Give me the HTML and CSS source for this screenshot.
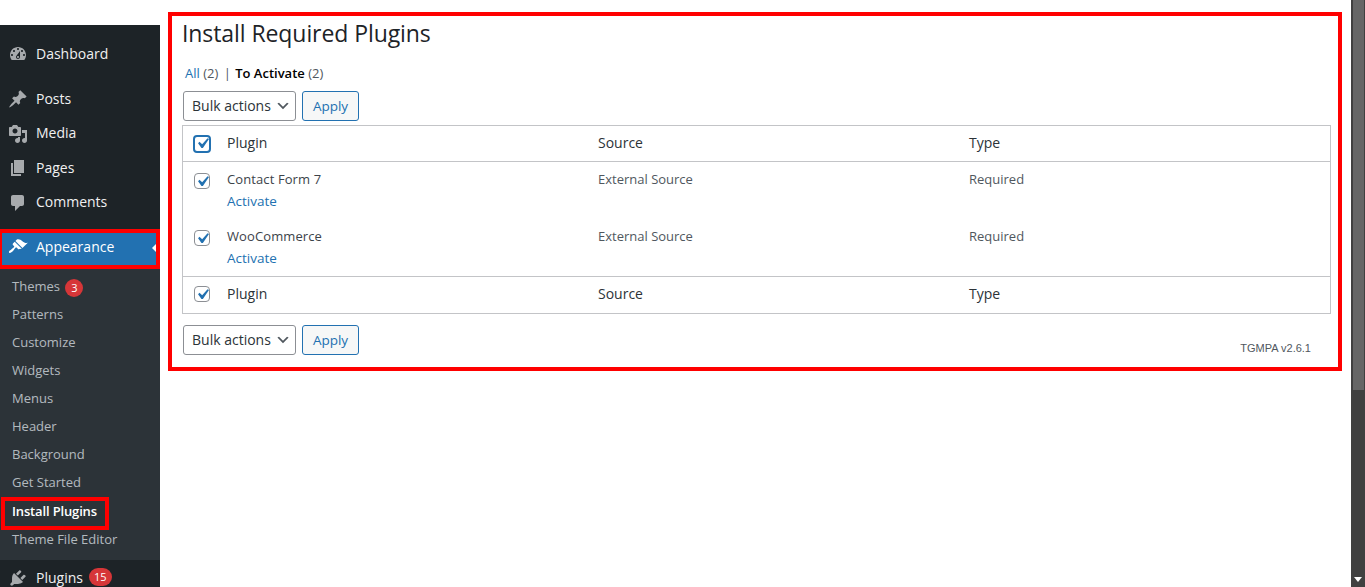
FILE: index.html
```html
<!DOCTYPE html>
<html lang="en">
<head>
<meta charset="utf-8">
<title>Install Required Plugins</title>
<link rel="stylesheet" href="styles.css">
</head>
<body>
<div class="page">
  <aside class="side">
    <div class="side-top"></div>
    <nav class="menu">
      <a class="item item-dash"><svg class="ico" viewBox="0 0 20 20"><path d="M3.76 16h12.48c1.1-1.37 1.76-3.11 1.76-5 0-4.42-3.58-8-8-8s-8 3.58-8 8c0 1.89.66 3.63 1.76 5zM10 4c.55 0 1 .45 1 1s-.45 1-1 1-1-.45-1-1 .45-1 1-1zM6 6c.55 0 1 .45 1 1s-.45 1-1 1-1-.45-1-1 .45-1 1-1zm8 0c.55 0 1 .45 1 1s-.45 1-1 1-1-.45-1-1 .45-1 1-1zm-5.37 5.55L12 7v6c0 1.1-.9 2-2 2s-2-.9-2-2c0-.57.24-1.08.63-1.45zM4 10c.55 0 1 .45 1 1s-.45 1-1 1-1-.45-1-1 .45-1 1-1zm12 0c.55 0 1 .45 1 1s-.45 1-1 1-1-.45-1-1 .45-1 1-1zm-5 3c0-.55-.45-1-1-1s-1 .45-1 1 .45 1 1 1 1-.45 1-1z"/></svg>Dashboard</a>
      <div class="sep"></div>
      <a class="item"><svg class="ico" viewBox="0 0 20 20"><path d="M10.44 3.02l1.82-1.82 6.36 6.35-1.83 1.82c-1.05-.68-2.48-.57-3.41.36l-.75.75c-.92.93-1.04 2.35-.35 3.41l-1.83 1.82-2.41-2.41-2.8 2.79c-.42.42-3.38 2.71-3.8 2.29s1.86-3.39 2.28-3.81l2.79-2.79L4.1 9.36l1.83-1.82c1.05.69 2.48.57 3.4-.36l.75-.75c.93-.92 1.05-2.35.36-3.41z"/></svg>Posts</a>
      <a class="item"><svg class="ico" viewBox="0 0 20 20"><path d="M13 11V4c0-.55-.45-1-1-1h-1.67L9 1H5L3.67 3H2c-.55 0-1 .45-1 1v7c0 .55.45 1 1 1h10c.55 0 1-.45 1-1zM7 4.5c1.38 0 2.5 1.12 2.5 2.5S8.38 9.5 7 9.5 4.5 8.38 4.5 7 5.62 4.5 7 4.5zM14 6h5v10.5c0 1.38-1.12 2.5-2.5 2.5S14 17.88 14 16.5s1.12-2.5 2.5-2.5c.17 0 .34.02.5.05V9h-3V6zm-4 8.05V13h2v3.5c0 1.38-1.12 2.5-2.5 2.5S7 17.88 7 16.5 8.12 14 9.5 14c.17 0 .34.02.5.05z"/></svg>Media</a>
      <a class="item"><svg class="ico" viewBox="0 0 20 20"><path d="M6 15V2h10v13H6zm-1 1h8v2H3V5h2v11z"/></svg>Pages</a>
      <a class="item"><svg class="ico" viewBox="0 0 20 20"><path d="M5 2h9c1.1 0 2 .9 2 2v7c0 1.1-.9 2-2 2h-2l-5 5v-5H5c-1.1 0-2-.9-2-2V4c0-1.1.9-2 2-2z"/></svg>Comments</a>
      <div class="sep"></div>
      <a class="item item-cur"><svg class="ico" viewBox="0 0 20 20"><path d="M14.48 11.06L7.41 3.99l1.5-1.5c.5-.56 2.3-.47 3.51.32 1.21.8 1.43 1.28 2.91 2.1 1.18.64 2.45 1.26 4.45.85zm-.71.71L6.7 4.7 4.93 6.47c-.39.39-.39 1.02 0 1.41l1.06 1.06c.39.39.39 1.03 0 1.42-.6.6-1.43 1.11-2.21 1.69-.35.26-.7.53-1.01.84C1.43 13.23.4 14.85 1.2 15.66c.8.8 2.43-.23 3.77-1.57.31-.31.58-.66.84-1.01.58-.78 1.09-1.61 1.69-2.21.39-.39 1.03-.39 1.42 0l1.06 1.06c.39.39 1.02.39 1.41 0z"/></svg>Appearance<span class="notch"></span><span class="mark mark-app"></span></a>
      <ul class="sub">
        <li>Themes <span class="badge badge-inline">3</span></li>
        <li>Patterns</li>
        <li>Customize</li>
        <li>Widgets</li>
        <li>Menus</li>
        <li>Header</li>
        <li>Background</li>
        <li>Get Started</li>
        <li class="sub-cur">Install Plugins<span class="mark mark-inst"></span></li>
        <li>Theme File Editor</li>
      </ul>
      <a class="item item-last"><svg class="ico" viewBox="0 0 20 20"><path d="M13.11 4.36L9.87 7.6 8 5.73l3.24-3.24c.35-.34 1.05-.2 1.56.32.52.51.66 1.21.31 1.55zm-8 1.77l.91-1.12 9.01 9.01-1.19.84c-.71.71-2.63 1.16-3.82 1.16H6.14L4.9 17.26c-.59.59-1.54.59-2.12 0-.59-.58-.59-1.53 0-2.12l1.24-1.24v-3.88c0-1.13.4-3.19 1.09-3.89zm7.26 3.97l3.24-3.24c.34-.35 1.04-.21 1.55.31.52.51.66 1.21.31 1.55l-3.24 3.25z"/></svg>Plugins <span class="badge badge-wide">15</span></a>
    </nav>
  </aside>
  <main class="main">
    <section class="wrap">
      <h1 class="title">Install Required Plugins</h1>
      <p class="views"><a class="link">All</a> (2) <span class="pipe">|</span> <b>To Activate</b> (2)</p>
      <div class="bulk">
        <div class="select">Bulk actions<svg class="chev" viewBox="0 0 20 20"><path d="M5 6l5 5 5-5 2 1-7 7-7-7z"/></svg></div>
        <div class="apply">Apply</div>
      </div>
      <div class="table">
        <div class="row head">
          <span class="check check-focus"><svg viewBox="0 0 20 20"><path d="M14.83 4.89l1.34.94-5.81 8.38H9.02L5.78 9.67l1.34-1.25 2.57 2.4z"/></svg></span>
          <span class="col col-a">Plugin</span><span class="col col-b">Source</span><span class="col">Type</span>
        </div>
        <div class="row body">
          <span class="check"><svg viewBox="0 0 20 20"><path d="M14.83 4.89l1.34.94-5.81 8.38H9.02L5.78 9.67l1.34-1.25 2.57 2.4z"/></svg></span>
          <div class="col col-a"><strong class="name">Contact Form 7</strong><a class="link act">Activate</a></div>
          <span class="col col-b">External Source</span><span class="col">Required</span>
        </div>
        <div class="row body">
          <span class="check"><svg viewBox="0 0 20 20"><path d="M14.83 4.89l1.34.94-5.81 8.38H9.02L5.78 9.67l1.34-1.25 2.57 2.4z"/></svg></span>
          <div class="col col-a"><strong class="name">WooCommerce</strong><a class="link act">Activate</a></div>
          <span class="col col-b">External Source</span><span class="col">Required</span>
        </div>
        <div class="row foot">
          <span class="check"><svg viewBox="0 0 20 20"><path d="M14.83 4.89l1.34.94-5.81 8.38H9.02L5.78 9.67l1.34-1.25 2.57 2.4z"/></svg></span>
          <span class="col col-a">Plugin</span><span class="col col-b">Source</span><span class="col">Type</span>
        </div>
      </div>
      <div class="bulk bulk-bottom">
        <div class="select">Bulk actions<svg class="chev" viewBox="0 0 20 20"><path d="M5 6l5 5 5-5 2 1-7 7-7-7z"/></svg></div>
        <div class="apply">Apply</div>
        <span class="ver">TGMPA v2.6.1</span>
      </div>
    </section>
  </main>
  <div class="scroll"><div class="thumb"></div><span class="arrow"></span></div>
</div>
</body>
</html>
```
FILE: styles.css
```css
* { box-sizing: border-box; }
html, body { margin: 0; height: 100%; overflow: hidden; background: #fff; }
body { font-family: "Open Sans", "Noto Sans", sans-serif; font-size: 13px; color: #50575e; }
.page { display: flex; width: 1365px; height: 587px; overflow: hidden; }

.side { width: 160px; flex: none; display: flex; flex-direction: column; }
.side-top { height: 25px; flex: none; }
.menu { flex: 1; background: #1d2327; padding-top: 12px; }
.item { position: relative; display: flex; align-items: center; height: 34.4px; padding: 0 0 2px 36px; color: #f0f0f1; font-size: 14px; }
.sep { height: 11px; }
.ico { position: absolute; left: 8px; top: 7px; width: 20px; height: 20px; fill: #a7aaad; }
.item-cur { background: #2271b1; color: #fff; height: 32px; margin-top: 2px; padding-bottom: 5px; }
.item-cur .ico { fill: #fff; top: 4px; }
.item-last { padding-bottom: 0; }
.item-last .ico { top: 8px; }
.notch { position: absolute; right: 4px; top: 11px; border: 4px solid transparent; border-right-color: #fff; border-left-width: 0; }
.mark { position: absolute; border: 4px solid #f00; pointer-events: none; }
.mark-app { left: 0; right: 0; top: -4px; bottom: -4px; border-left-width: 2px; }
.mark-inst { left: 1px; top: 0; width: 108px; height: 33px; }
.sub { list-style: none; margin: 4px 0 0; padding: 3.65px 0 6.25px; background: #2c3338; }
.sub li { position: relative; height: 28.11px; line-height: 26px; padding-left: 12px; font-size: 13px; color: rgba(240,246,252,.7); }
.sub .sub-cur { color: #fff; font-weight: 600; letter-spacing: -.15px; line-height: 28px; }
.badge { display: inline-block; min-width: 18px; height: 18px; margin-left: 2px; border-radius: 9px; background: #d63638; color: #fff; font-size: 11px; line-height: 18px; letter-spacing: 0; text-align: center; vertical-align: middle; }
.badge-inline { position: relative; top: 1px; margin-top: -2px; margin-bottom: -2px; }
.badge-wide { padding: 0 5px; margin-left: 6px; }

.main { flex: 1; min-width: 0; padding: 12px 0 0 8px; }
.wrap { width: 1174px; height: 359px; border: 4px solid #f00; padding: 0 7px 0 10px; }
.title { margin: 0; height: 34px; font-size: 23px; font-weight: 400; line-height: 34px; letter-spacing: -.08px; color: #1d2327; }
.views { margin: 13px 0 0; height: 20px; padding-left: 3px; line-height: 20px; color: #50575e; font-size: 13px; }
.views b { font-weight: 600; color: #000; }
.link { color: #2271b1; }
.pipe { color: #50575e; padding: 0 1px 0 2px; }
.bulk { position: relative; display: flex; gap: 6px; margin: 8px 0 0 1px; }
.bulk-bottom { margin-top: 11px; }
.select { display: flex; align-items: center; justify-content: space-between; width: 113px; height: 30px; padding: 0 4px 2px 8px; border: 1px solid #8c8f94; border-radius: 3px; font-size: 14px; color: #2c3338; }
.chev { width: 16px; height: 16px; fill: #50575e; margin-top: 2px; }
.apply { width: 57px; height: 30px; border: 1px solid #2271b1; border-radius: 3px; background: #f6f7f7; color: #2271b1; font-size: 13.5px; line-height: 28px; text-align: center; }
.ver { position: absolute; right: 20px; top: 16px; font-family: "Liberation Sans", sans-serif; font-size: 11px; line-height: 14px; color: #50575e; }

.table { margin-top: 4px; width: 1149px; border: 1px solid #c3c4c7; }
.row { display: flex; position: relative; padding-left: 44px; }
.col { display: block; font-size: 13px; }
.col-a { width: 371px; }
.col-b { width: 371px; }
.head { height: 36px; padding-bottom: 2px; align-items: center; border-bottom: 1px solid #c3c4c7; }
.head .col, .foot .col { font-size: 14px; color: #2c3338; }
.body { height: 57px; padding-top: 8px; }
.foot { height: 37px; padding-bottom: 3px; align-items: center; border-top: 1px solid #c3c4c7; }
.name { display: block; font-weight: 500; font-size: 13px; line-height: 18px; letter-spacing: .1px; color: #3c434a; }
.act { display: block; margin-top: 4px; line-height: 18px; font-size: 13.5px; }
.body > .col { line-height: 18px; }
.check { position: absolute; left: 11px; top: 50%; width: 16px; height: 16px; margin-top: -8px; border: 1px solid #8c8f94; border-radius: 4px; background: #fff; }
.body .check { top: 11px; margin-top: 0; }
.foot .check { margin-top: -9px; }
.head .check { margin-top: -9px; }
.check svg { display: block; width: 21px; height: 21px; margin: -3.5px 0 0 -3.5px; fill: #2271b1; }
.check-focus { left: 10px; width: 18px; height: 18px; border: 2px solid #2271b1; }

.scroll { position: relative; width: 14px; flex: none; background: #404040; padding: 0 1px 0 2px; }
.thumb { height: 390px; background: #666; }
.arrow { position: absolute; left: 3px; bottom: 5px; border: 4px solid transparent; border-bottom-width: 0; border-top: 5px solid #fff; }
```
